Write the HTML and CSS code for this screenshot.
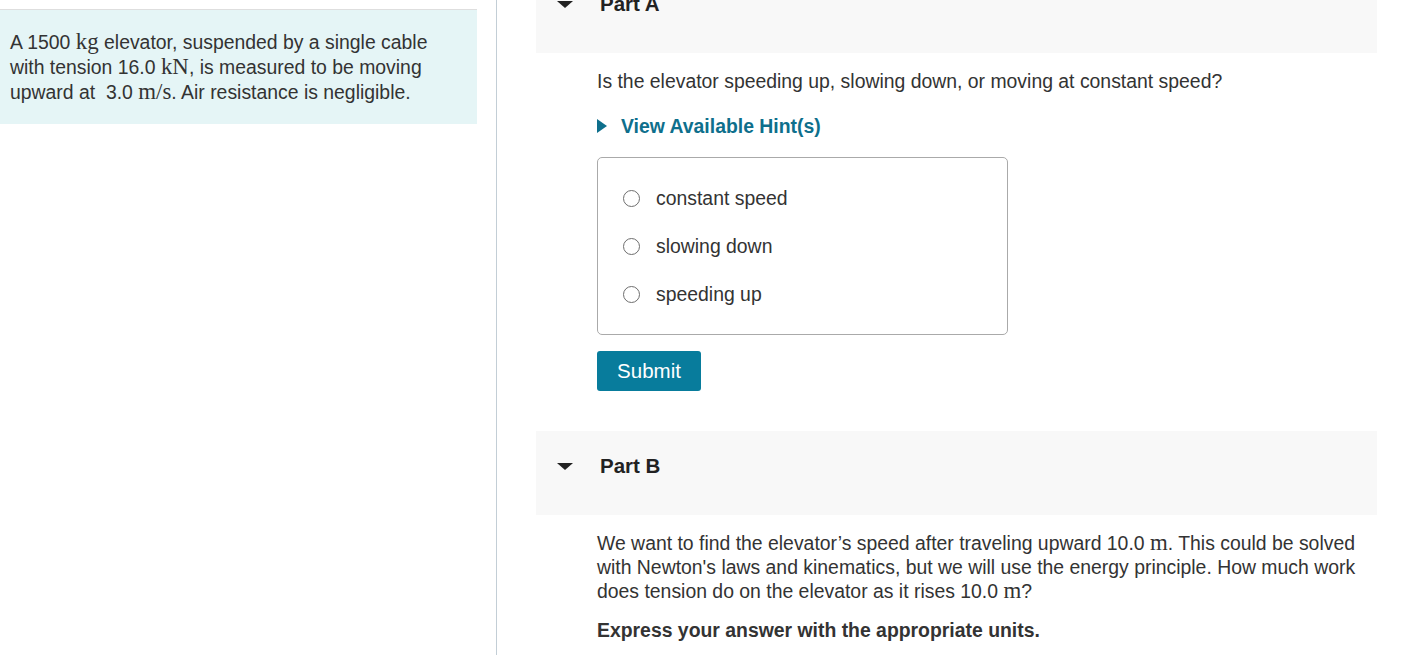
FILE: index.html
```html
<!DOCTYPE html>
<html lang="en">
<head>
<meta charset="utf-8">
<title>Elevator problem</title>
<link rel="stylesheet" href="styles.css">
</head>
<body>
<div class="page">
  <aside class="left-col">
    <div class="intro">
      A 1500 <span class="math">kg</span> elevator, suspended by a single cable with tension 16.0 <span class="math">kN</span>, is measured to be moving upward at &nbsp;3.0 <span class="math">m/s</span>. Air resistance is negligible.
    </div>
  </aside>
  <main class="right-col">
    <section class="part">
      <div class="part-head">
        <span class="caret"></span>
        <h2 class="part-title">Part A</h2>
      </div>
      <div class="part-body">
        <p class="question">Is the elevator speeding up, slowing down, or moving at constant speed?</p>
        <div class="hint"><span class="hint-caret"></span>View Available Hint(s)</div>
        <div class="choices">
          <label class="choice"><span class="radio"></span>constant speed</label>
          <label class="choice"><span class="radio"></span>slowing down</label>
          <label class="choice"><span class="radio"></span>speeding up</label>
        </div>
        <button class="submit">Submit</button>
      </div>
    </section>
    <section class="part">
      <div class="part-head">
        <span class="caret"></span>
        <h2 class="part-title">Part B</h2>
      </div>
      <div class="part-body">
        <p class="question para">We want to find the elevator’s speed after traveling upward 10.0 <span class="math">m</span>. This could be solved with Newton's laws and kinematics, but we will use the energy principle. How much work does tension do on the elevator as it rises 10.0 <span class="math">m</span>?</p>
        <p class="instr">Express your answer with the appropriate units.</p>
      </div>
    </section>
  </main>
</div>
</body>
</html>
```
FILE: styles.css
```css
html, body {
  margin: 0;
  padding: 0;
  background: #ffffff;
}
body {
  font-family: "Liberation Sans", Arial, sans-serif;
  font-size: 19.4px;
  color: #333333;
  overflow: hidden;
}
.page {
  display: flex;
  height: 655px;
}
.left-col {
  width: 496px;
  flex: none;
  border-right: 1px solid #c3ced6;
}
.intro {
  width: 440px;
  margin-top: 9px;
  border-top: 1px solid #dedede;
  background: #e5f5f6;
  padding: 20px 27px 19px 10px;
  line-height: 25px;
}
.math {
  font-family: "Liberation Serif", "Times New Roman", serif;
  font-size: 1.18em;
  line-height: 1;
}
.right-col {
  flex: 1;
  padding: 0 33px 0 39px;
  margin-top: -31px;
}
.part-head {
  background: #f8f8f8;
  height: 84px;
  box-sizing: border-box;
  padding-top: 24px;
  display: flex;
  align-items: flex-start;
}
.caret {
  width: 0;
  height: 0;
  border-left: 8px solid transparent;
  border-right: 8px solid transparent;
  border-top: 7px solid #222222;
  margin: 8px 0 0 21px;
}
.part-title {
  margin: 0 0 0 27px;
  font-size: 20.5px;
  line-height: 22px;
  font-weight: bold;
  color: #222222;
}
.part-body {
  padding: 16px 0 0 61px;
}
.question {
  margin: 0;
  line-height: 24px;
}
.hint {
  margin-top: 21px;
  display: flex;
  align-items: center;
  font-weight: bold;
  color: #0e6f8c;
  line-height: 24px;
}
.hint-caret {
  width: 0;
  height: 0;
  border-top: 7px solid transparent;
  border-bottom: 7px solid transparent;
  border-left: 10px solid #0e6f8c;
  margin-right: 14px;
}
.choices {
  margin-top: 19px;
  width: 409px;
  border: 1px solid #aaaaaa;
  border-radius: 5px;
  padding: 16px 0 16px 0;
}
.choice {
  display: flex;
  align-items: center;
  height: 48px;
  padding-left: 25px;
}
.radio {
  width: 15px;
  height: 15px;
  border: 1.5px solid #6e6e6e;
  border-radius: 50%;
  margin-right: 16px;
  flex: none;
}
.submit {
  margin-top: 16px;
  height: 40px;
  width: 104px;
  background: #087c9c;
  color: #ffffff;
  border: none;
  border-radius: 3px;
  font-family: "Liberation Sans", Arial, sans-serif;
  font-size: 20.5px;
  padding: 0;
  margin-bottom: 40px;
  display: block;
}
.para {
  width: 780px;
}
.instr {
  margin: 15px 0 0 0;
  font-weight: bold;
  line-height: 24px;
}
```
